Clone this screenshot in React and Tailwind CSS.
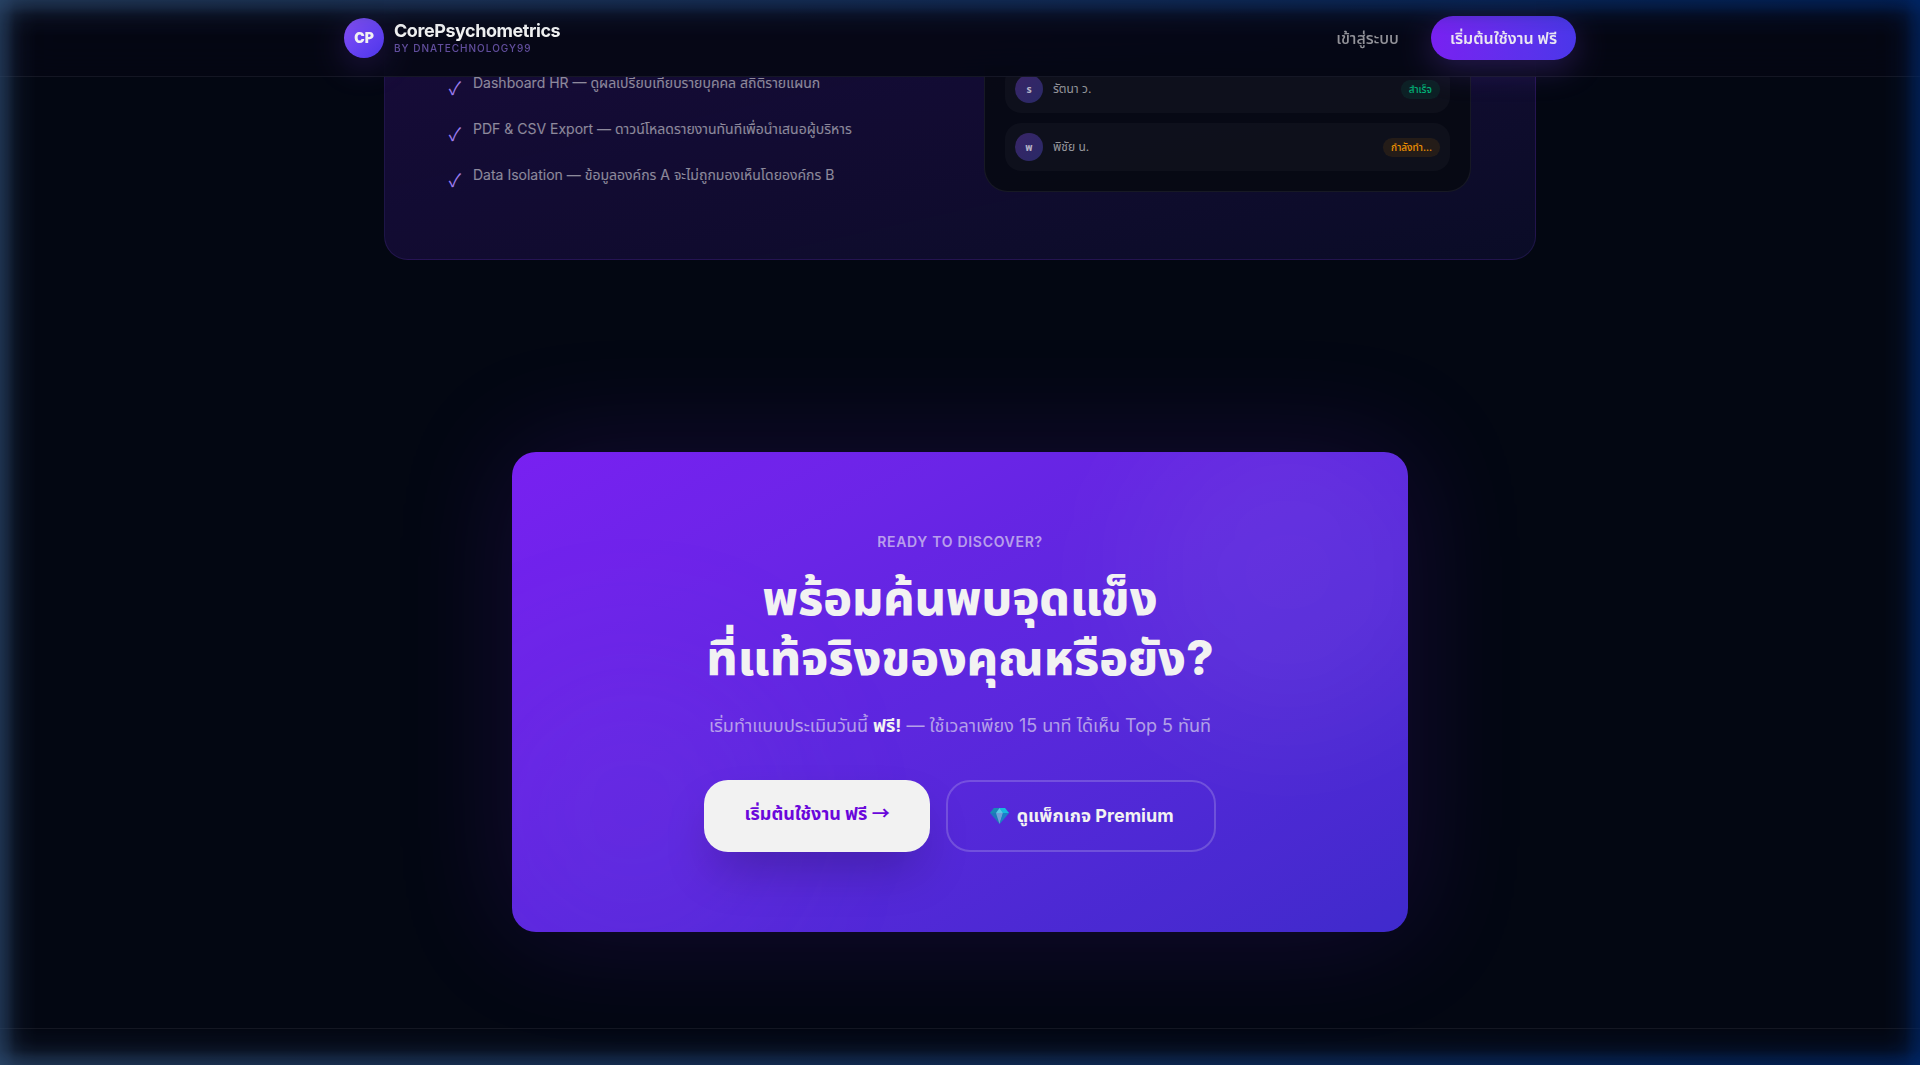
const FEATURES = [
  'Dashboard HR — ดูผลเปรียบเทียบรายบุคคล สถิติรายแผนก',
  'PDF & CSV Export — ดาวน์โหลดรายงานทันทีเพื่อนำเสนอผู้บริหาร',
  'Data Isolation — ข้อมูลองค์กร A จะไม่ถูกมองเห็นโดยองค์กร B'
];

const MEMBERS = [
  {
    initial: 'ร',
    name: 'รัตนา ว.',
    status: 'สำเร็จ',
    badge: 'bg-emerald-500/10 text-emerald-500'
  },
  {
    initial: 'พ',
    name: 'พิชัย น.',
    status: 'กำลังทำ...',
    badge: 'bg-amber-500/10 text-amber-500'
  }
];

const Gem = () => (
  <svg
    className="ml-[2px]"
    width="19"
    height="16"
    viewBox="0 0 19 16"
    aria-hidden="true"
  >
    <path d="M4 0h11l4 5-9.500 11L0 5z" fill="#1f7fc4" />
    <path d="M4 0h5.500L6 5H0z" fill="#1c8fc0" />
    <path d="M9.500 0H15l4 5h-6z" fill="#19c3ea" />
    <path d="M9.500 0L13 5H6z" fill="#5fd4f2" />
    <path d="M6 5h7L9.500 16z" fill="#74a9e6" />
    <path d="M13 5h6L9.500 16z" fill="#1d86d2" />
  </svg>
);

const Header = () => (
  <header className="fixed inset-x-0 top-0 z-20 border-b border-white/7 bg-[#050815]/90 backdrop-blur-xl">
    <div className="mx-auto flex max-w-7xl items-center justify-between px-6 py-4">
      <a href="#" className="flex items-center gap-[10px]">
        <span className="flex h-10 w-10 items-center justify-center rounded-full bg-linear-to-br from-violet-500 to-indigo-600 text-sm font-black text-white shadow-[0_8px_32px] shadow-violet-500/20">
          CP
        </span>
        <span className="flex flex-col">
          <span className="text-lg leading-5 font-bold tracking-tight text-white">
            CorePsychometrics
          </span>
          <span className="text-[10px] leading-[14px] font-medium tracking-widest text-violet-400/60">
            BY DNATECHNOLOGY99
          </span>
        </span>
      </a>
      <nav className="flex items-center gap-8">
        <a href="#login" className="text-base font-medium text-white/60">
          เข้าสู่ระบบ
        </a>
        <a
          href="#register"
          className="rounded-3xl bg-linear-to-r from-violet-600 to-indigo-600 px-[19px] py-[10px] text-base font-semibold text-white/95 shadow-[0_8px_32px] shadow-violet-500/25"
        >
          เริ่มต้นใช้งาน ฟรี
        </a>
      </nav>
    </div>
  </header>
);

const Organization = () => (
  <section className="pb-24">
    <div className="mx-auto grid max-w-6xl grid-cols-2 items-end gap-12 rounded-b-3xl border border-t-0 border-violet-500/15 bg-linear-to-br from-violet-600/18 to-indigo-600/10 px-16 pt-[65px] pb-16">
      <ul className="flex flex-col gap-4">
        {FEATURES.map(feature => (
          <li key={feature} className="flex items-start gap-3">
            <span className="flex h-7 w-3 items-center justify-center text-lg text-violet-400 font-['Noto_Sans_CJK_JP',sans-serif]">
              ✓
            </span>
            <span className="pb-[10px] text-sm text-white/55">{feature}</span>
          </li>
        ))}
      </ul>
      <div className="mb-[3px] flex flex-col gap-[10px] rounded-b-3xl border border-t-0 border-white/7 bg-[#080a14]/90 px-5 pb-5">
        {MEMBERS.map(member => (
          <div
            key={member.name}
            className="flex items-center gap-[10px] rounded-2xl bg-white/3 p-[10px]"
          >
            <span className="flex h-7 w-7 items-center justify-center rounded-full bg-linear-to-br from-violet-500/35 to-indigo-500/35 text-[10px] font-bold text-white/70">
              {member.initial}
            </span>
            <span className="flex-1 text-xs text-white/60">{member.name}</span>
            <span
              className={`rounded-full px-2 py-[2px] text-[10px] leading-[15px] font-medium ${member.badge}`}
            >
              {member.status}
            </span>
          </div>
        ))}
      </div>
    </div>
  </section>
);

const CallToAction = () => (
  <section className="py-24">
    <div className="relative mx-auto max-w-4xl rounded-3xl bg-linear-to-br from-violet-600 to-indigo-700 p-20 text-center shadow-[0_0_120px] shadow-violet-600/15">
      <div className="pointer-events-none absolute inset-0 overflow-hidden rounded-3xl">
        <div className="absolute -top-10 -right-10 h-80 w-80 rounded-full bg-white/5 blur-3xl" />
        <div className="absolute -bottom-10 -left-10 h-80 w-80 rounded-full bg-violet-500/10 blur-3xl" />
      </div>
      <div className="relative">
        <p className="text-sm font-semibold tracking-wider text-white/60">
          READY TO DISCOVER?
        </p>
        <h2 className="mt-4 text-5xl leading-[60px] font-extrabold text-white">
          พร้อมค้นพบจุดแข็ง
          <br />
          ที่แท้จริงของคุณหรือยัง?
        </h2>
        <p className="mt-6 text-lg text-white/60">
          เริ่มทำแบบประเมินวันนี้ <strong className="text-white">ฟรี!</strong> —
          ใช้เวลาเพียง 15 นาที ได้เห็น Top 5 ทันที
        </p>
        <div className="mt-10 flex justify-center gap-4">
          <a
            href="#register"
            className="rounded-3xl bg-white px-10 py-5 text-lg font-bold text-violet-700 shadow-2xl shadow-black/25"
          >
            เริ่มต้นใช้งาน ฟรี{' '}
            <span className="leading-none font-['Noto_Sans_CJK_JP',sans-serif]">→</span>
          </a>
          <a
            href="#pricing"
            className="flex items-center gap-2 rounded-3xl border-2 border-white/20 px-10 py-5 text-lg font-bold text-white"
          >
            <Gem />
            ดูแพ็กเกจ Premium
          </a>
        </div>
      </div>
    </div>
  </section>
);

// Soft blue light along the window's edges
const EdgeGlow = () => (
  <div className="pointer-events-none fixed inset-0 z-30 bg-black/5">
    <div className="h-full bg-linear-to-r from-[#2b486c] to-[#00286c] mask-[linear-gradient(to_right,#000a,#0007_8px,#0003_15px,#0001_24px,transparent_36px,transparent_calc(100%-36px),#0001_calc(100%-24px),#0003_calc(100%-15px),#0007_calc(100%-8px),#000a),linear-gradient(to_bottom,#000a,#0007_8px,#0003_15px,#0001_24px,transparent_36px,transparent_calc(100%-36px),#0001_calc(100%-24px),#0003_calc(100%-15px),#0007_calc(100%-8px),#000a)]" />
  </div>
);

export default function App() {
  return (
    <div className="flex min-h-screen flex-col bg-[#040814] font-[Inter,'Noto_Sans_Thai','Noto_Sans',sans-serif]">
      <Header />
      <main>
        <Organization />
        <CallToAction />
      </main>
      <footer className="flex-1 border-t border-white/7" />
      <EdgeGlow />
    </div>
  );
}
